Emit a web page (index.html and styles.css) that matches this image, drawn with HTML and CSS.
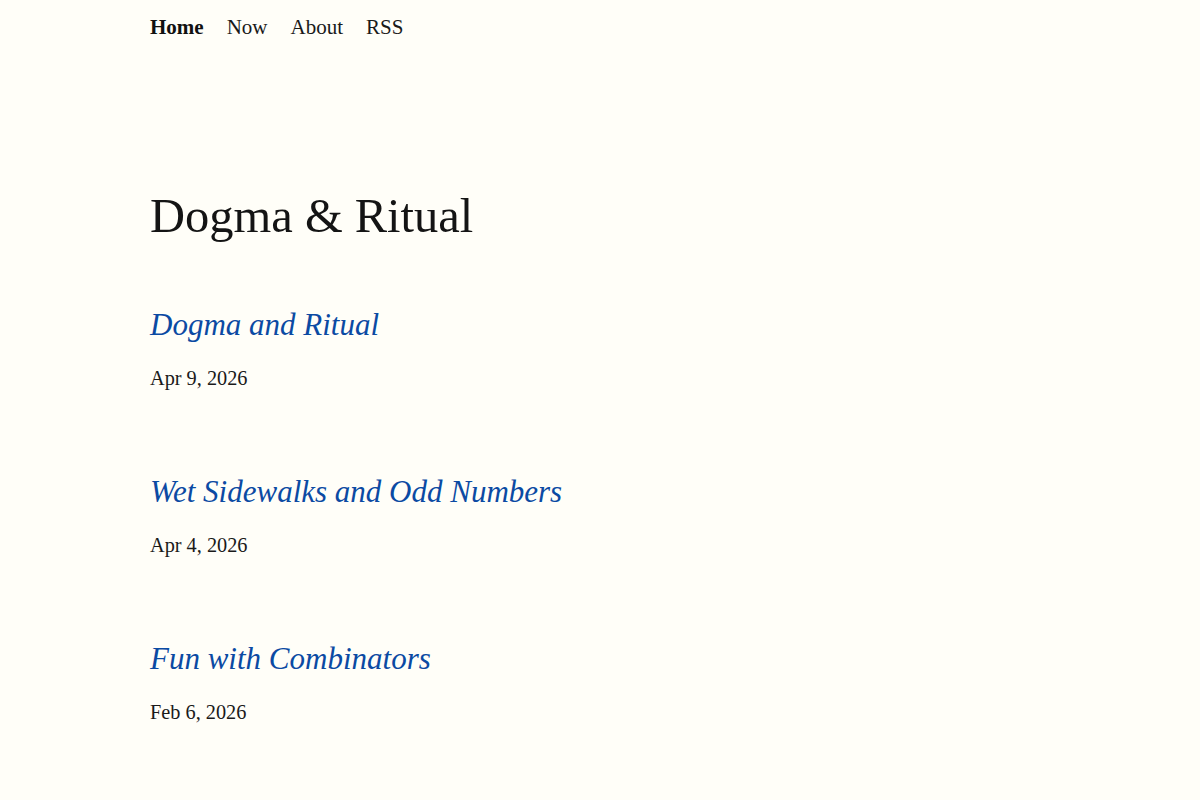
FILE: index.html
```html
<!DOCTYPE html>
<html>
    <head>
        <title>Dogma &amp; Ritual</title>

        <link rel="stylesheet" href="styles.css">
    </head>
    <body>
        <nav class="nav">
            <a href="#" class="nav-link current">Home</a>
            <a href="#" class="nav-link">Now</a>
            <a href="#" class="nav-link">About</a>
            <a href="#" class="nav-link">RSS</a>
        </nav>

        <main class="main">
            <h1 class="site-title">Dogma &amp; Ritual</h1>

            <div class="post">
                <a href="#" class="post-title">Dogma and Ritual</a>
                <p class="post-date">Apr 9, 2026</p>
            </div>

            <div class="post">
                <a href="#" class="post-title">Wet Sidewalks and Odd Numbers</a>
                <p class="post-date">Apr 4, 2026</p>
            </div>

            <div class="post">
                <a href="#" class="post-title">Fun with Combinators</a>
                <p class="post-date">Feb 6, 2026</p>
            </div>
        </main>
    </body>
</html>
```

FILE: styles.css
```css
body{
    margin:0;
    background-color:#fffef8;
    color:#1a1a1a;
    font-family:"Liberation Serif", "Times New Roman", serif;
}

.nav{
    display:flex;
    gap:23px;
    padding:12px 150px 0;
}

.nav-link{
    font-size:21px;
    line-height:30px;
    color:#1a1a1a;
    text-decoration:none;
}

.current{
    font-weight:bold;
    color:#111;
}

.main{
    padding:0 150px;
}

.site-title{
    font-size:48.5px;
    font-weight:normal;
    line-height:60px;
    margin:144px 0 59px;
    color:#141414;
}

.post{
    margin-bottom:80px;
}

.post-title{
    display:block;
    font-size:31px;
    font-style:italic;
    line-height:40px;
    color:#0b4aa3;
    text-decoration:none;
}

.post-date{
    font-size:20.3px;
    line-height:28px;
    margin:19px 0 0;
}
```
